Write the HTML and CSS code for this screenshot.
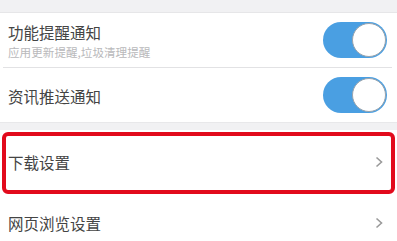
FILE: index.html
```html
<!DOCTYPE html>
<html>
<head>
<meta charset="utf-8">
<link rel="stylesheet" href="styles.css">
</head>
<body>
<div class="page">
  <div class="band top"></div>
  <div class="section">
    <div class="row">
      <div class="label">
        <div class="title">功能提醒通知</div>
        <div class="sub">应用更新提醒,垃圾清理提醒</div>
      </div>
      <div class="toggle"><div class="knob"></div></div>
    </div>
    <div class="divider"></div>
    <div class="row">
      <div class="label"><div class="title">资讯推送通知</div></div>
      <div class="toggle"><div class="knob"></div></div>
    </div>
  </div>
  <div class="band mid"></div>
  <div class="section second">
    <div class="row nav">
      <div class="title">下载设置</div>
      <svg class="chev" width="8" height="12" viewBox="0 0 8 12"><path d="M1.5 1.5 L6.5 6 L1.5 10.5" fill="none" stroke="#9a9a9a" stroke-width="1.6"/></svg>
    </div>
    <div class="row nav">
      <div class="title">网页浏览设置</div>
      <svg class="chev" width="8" height="12" viewBox="0 0 8 12"><path d="M1.5 1.5 L6.5 6 L1.5 10.5" fill="none" stroke="#9a9a9a" stroke-width="1.6"/></svg>
    </div>
    <div class="highlight"></div>
  </div>
</div>
</body>
</html>
```
FILE: styles.css
```css
html, body {
  margin: 0;
  padding: 0;
  background: #ffffff;
}
.page {
  width: 397px;
  height: 241px;
  overflow: hidden;
  font-family: "Noto Sans CJK SC", "Noto Sans", sans-serif;
  color: #444;
}
.band {
  background: #f1f1f3;
}
.band.top {
  height: 12px;
  border-bottom: 1px solid #e6e6e8;
}
.band.mid {
  height: 7px;
  border-top: 1px solid #e8e8ea;
}
.section {
  background: #fff;
  position: relative;
}
.row {
  display: flex;
  align-items: center;
  justify-content: space-between;
  height: 54px;
  padding: 0 10px 0 8px;
}
.divider {
  height: 1px;
  background: #e2e2e4;
  margin: 0 5px 0 3px;
}
.title {
  font-size: 15.5px;
  line-height: 18px;
  color: #444;
}
.label .title {
  margin-top: 2px;
}
.sub {
  font-size: 11.6px;
  line-height: 14px;
  color: #b9b9bb;
  margin-top: 4px;
}
.label {
  display: flex;
  flex-direction: column;
}
.toggle {
  width: 64px;
  height: 36px;
  border-radius: 18px;
  background: #4a9fe2;
  display: flex;
  align-items: center;
  justify-content: flex-end;
  box-sizing: border-box;
  padding-right: 1px;
}
.knob {
  width: 34px;
  height: 34px;
  border-radius: 50%;
  background: #fff;
  box-sizing: border-box;
  border: 1.5px solid #9aa4ad;
}
.second .row {
  height: 57px;
  padding-right: 14px;
}
.second .row:first-child {
  height: 64px;
}
.highlight {
  position: absolute;
  left: 2px;
  top: 2px;
  width: 393px;
  height: 62px;
  box-sizing: border-box;
  border: 4px solid #e20a1c;
  border-radius: 6px;
}
```
